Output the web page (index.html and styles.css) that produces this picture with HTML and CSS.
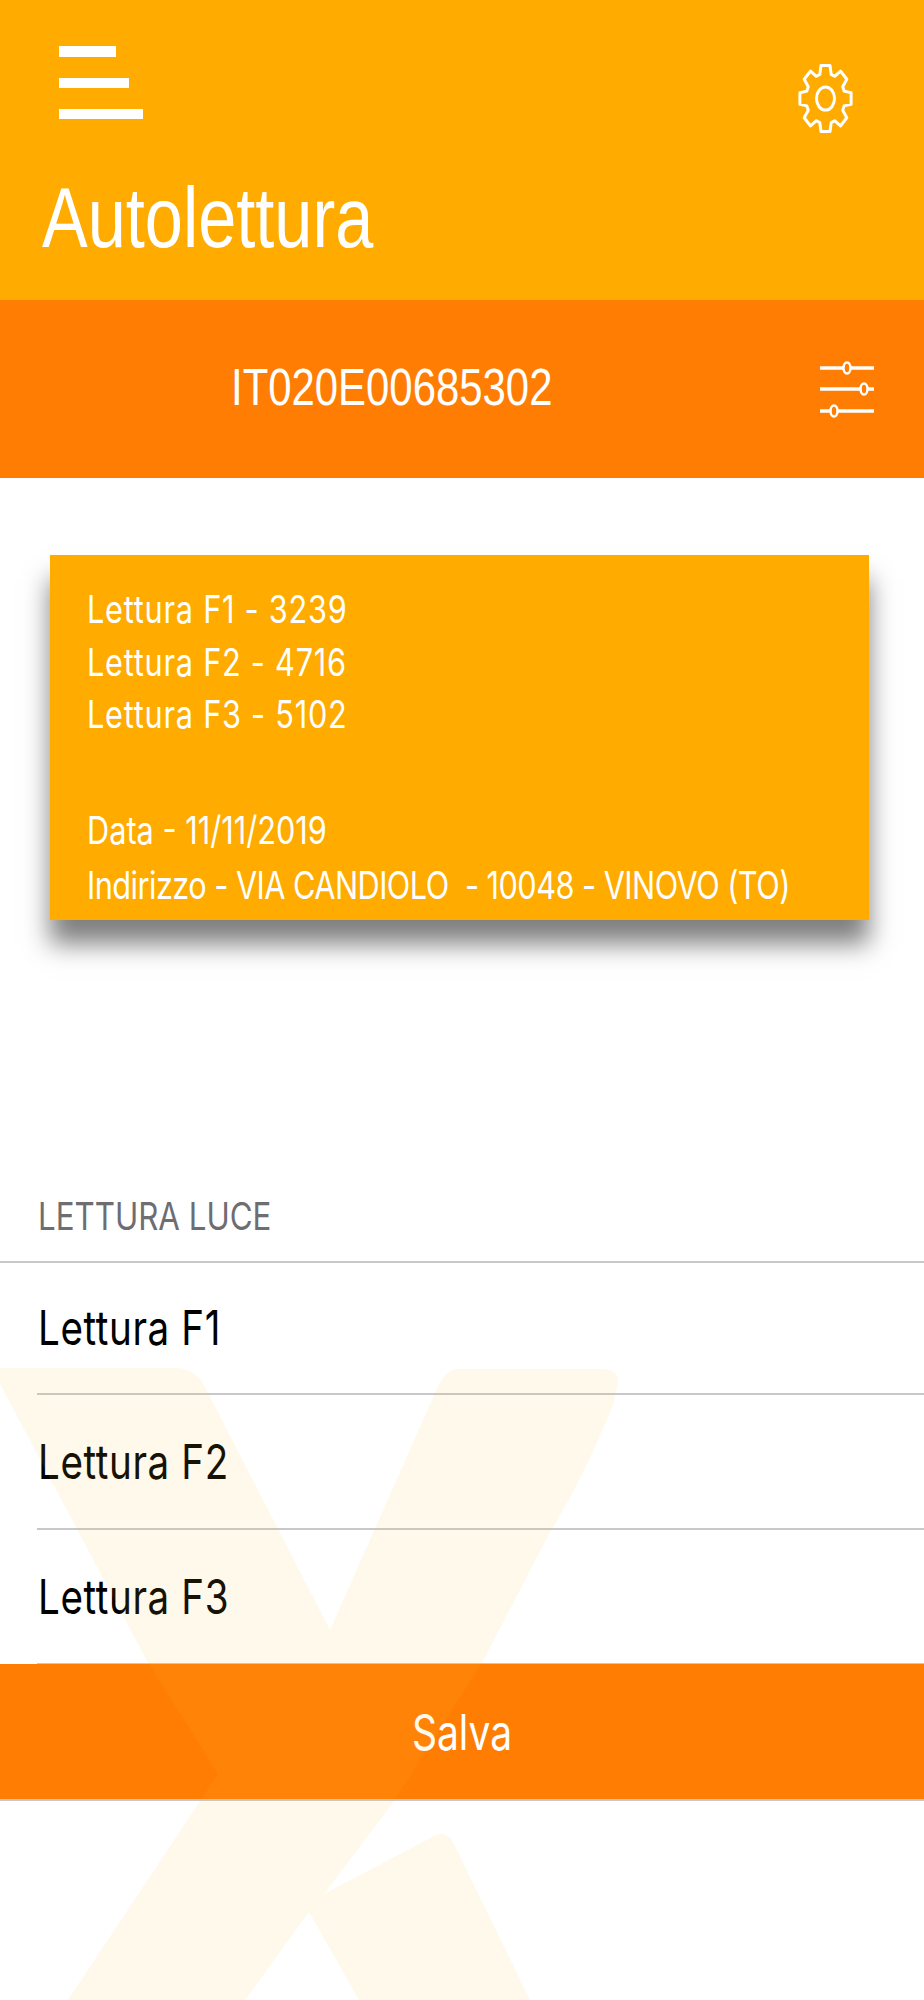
FILE: index.html
```html
<!DOCTYPE html>
<html lang="it">
<head>
<meta charset="utf-8">
<title>Autolettura</title>
<link rel="stylesheet" href="styles.css">
</head>
<body>
<div class="page">
  <header class="header">
    <div class="toolbar">
      <svg class="menu-icon" viewBox="0 0 84 73" aria-hidden="true">
        <rect x="0" y="0" width="57" height="11"/>
        <rect x="0" y="32" width="70" height="10"/>
        <rect x="0" y="63" width="84" height="10"/>
      </svg>
      <svg class="gear-icon" viewBox="-27.5 -34.5 55 69" aria-hidden="true">
        <g transform="scale(1 1.29)">
          <path vector-effect="non-scaling-stroke" d="M-5.7-18.65-4.51-25.61H4.51L5.7-18.65 9.15-17.22 14.91-21.3 21.3-14.91 17.22-9.15 18.65-5.7 25.61-4.51V4.51L18.65 5.7 17.22 9.15 21.3 14.91 14.91 21.3 9.15 17.22 5.7 18.65 4.51 25.61H-4.51L-5.7 18.65-9.15 17.22-14.91 21.3-21.3 14.91-17.22 9.15-18.65 5.7-25.61 4.51V-4.51L-18.65-5.7-17.22-9.15-21.3-14.91-14.91-21.3-9.15-17.22Z"/>
          <circle vector-effect="non-scaling-stroke" cx="0" cy="0" r="9"/>
        </g>
      </svg>
    </div>
    <h1 class="title">Autolettura</h1>
  </header>

  <section class="account">
    <span class="account-code">IT020E00685302</span>
    <svg class="filter-icon" viewBox="0 0 54 58" aria-hidden="true">
      <path d="M0 8H54M0 29H54M0 51H54"/>
      <ellipse cx="27" cy="8" rx="3.5" ry="5.5"/>
      <ellipse cx="44" cy="29" rx="3.5" ry="5.5"/>
      <ellipse cx="14" cy="51" rx="3.5" ry="5.5"/>
    </svg>
  </section>

  <article class="card">
    <div class="card-group">
      <p class="card-line card-line-reading">Lettura F1 - 3239</p>
      <p class="card-line card-line-reading">Lettura F2 - 4716</p>
      <p class="card-line card-line-reading">Lettura F3 - 5102</p>
    </div>
    <div class="card-group card-group-info">
      <p class="card-line">Data - 11/11/2019</p>
      <p class="card-line card-line-address">Indirizzo - VIA CANDIOLO  - 10048 - VINOVO (TO)</p>
    </div>
  </article>

  <section class="form">
    <h2 class="form-label">LETTURA LUCE</h2>
    <div class="rows">
      <div class="row"><span class="row-text">Lettura F1</span></div>
      <div class="row"><span class="row-text">Lettura F2</span></div>
      <div class="row"><span class="row-text">Lettura F3</span></div>
    </div>
    <div class="save"><span class="save-text">Salva</span></div>
  </section>

  <svg class="watermark" viewBox="0 0 924 2000" aria-hidden="true">
    <path d="M0 1368H175Q197 1368 206 1389L330 1630 439 1384Q447 1369 460 1369H600Q620 1369 618 1384L613 1405Q585 1475 548 1536L483 1661 395 1800 324 1894 436 1835Q448 1831 454 1844L530 2000H359L309 1912 245 2000H68L218 1774 147 1661 0 1384Z"/>
  </svg>
</div>
</body>
</html>
```
FILE: styles.css
```css
* {
  box-sizing: border-box;
}

html,
body {
  margin: 0;
  padding: 0;
}

body {
  background: #fff;
  font-family: "Inter", "Liberation Sans", sans-serif;
}

.page {
  position: relative;
  width: 924px;
  height: 2000px;
  overflow: hidden;
  background: #fff;
}

/* Header */
.header {
  height: 300px;
  padding-top: 46px;
  background: #ffab00;
}

.toolbar {
  display: flex;
  justify-content: space-between;
  align-items: flex-start;
  padding: 0 71px 0 59px;
}

.menu-icon {
  width: 84px;
  height: 73px;
  fill: #fff;
}

.gear-icon {
  width: 55px;
  height: 69px;
  margin-top: 18px;
  fill: none;
  stroke: #fff;
  stroke-width: 3px;
  stroke-linejoin: round;
}

.title {
  margin: 45px 0 0 42px;
  font-family: "Liberation Sans", Arial, sans-serif;
  font-size: 68.5px;
  font-weight: 400;
  line-height: 80px;
  color: #fff;
  transform: scaleY(1.25);
}

/* Account bar */
.account {
  display: flex;
  justify-content: space-between;
  align-items: center;
  height: 178px;
  padding: 0 50px 0 231px;
  background: #ff7d03;
}

.account-code {
  margin-bottom: 2px;
  font-family: "Liberation Sans", Arial, sans-serif;
  font-size: 41.9px;
  line-height: 50px;
  color: #fff;
  transform: scaleY(1.22);
}

.filter-icon {
  width: 54px;
  height: 58px;
  fill: #ff7d03;
  stroke: #fff;
}

.filter-icon path {
  stroke-width: 3.5px;
}

.filter-icon ellipse {
  stroke-width: 2.5px;
}

/* Reading card */
.card {
  width: 819px;
  height: 365px;
  margin: 77px 0 0 50px;
  padding: 28px 0 0 37px;
  background: #ffab00;
  box-shadow: 0 24px 24px rgba(0, 0, 0, 0.5);
}

.card-group-info {
  margin-top: 63px;
}

.card-line {
  margin: 0;
  font-size: 30.7px;
  line-height: 52.5px;
  color: #fff;
  white-space: pre;
  transform: scaleY(1.25);
}

.card-line-reading {
  letter-spacing: 0.75px;
}

.card-line-address {
  margin-top: 3px;
  letter-spacing: -0.53px;
}

/* Form */
.form {
  margin-top: 277px;
}

.form-label {
  margin: 0;
  padding: 0 0 24px 38px;
  font-size: 31.3px;
  font-weight: 400;
  line-height: 40px;
  color: #6d6d72;
  transform-origin: 0 20px;
  transform: scaleY(1.22);
}

.rows {
  border-top: 2px solid #c8c7cc;
}

.row {
  display: flex;
  align-items: center;
  height: 135px;
  margin-left: 37px;
  padding-left: 1px;
  border-bottom: 2px solid #c8c7cc;
}

.row:first-child {
  height: 132px;
}

.row-text {
  font-size: 38.6px;
  letter-spacing: 0.6px;
  color: #000;
  transform: scaleY(1.245);
}

.save {
  display: flex;
  justify-content: center;
  align-items: center;
  height: 137px;
  margin-top: -1px;
  background: #ff7d03;
  border-bottom: 2px solid #c8c7cc;
}

.save-text {
  font-size: 39px;
  color: #fff;
  transform: scaleY(1.28);
}

/* Background watermark */
.watermark {
  position: absolute;
  top: 0;
  left: 0;
  width: 924px;
  height: 2000px;
  fill: #ffc038;
  fill-opacity: 0.095;
  pointer-events: none;
}
```
